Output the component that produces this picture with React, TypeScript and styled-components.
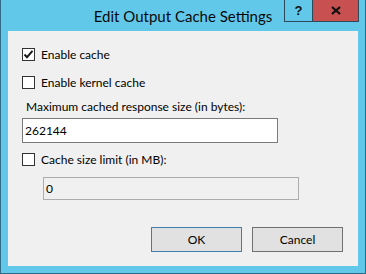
import React from 'react';
import styled, { createGlobalStyle } from 'styled-components';

const GlobalStyle = createGlobalStyle`
  html, body {
    margin: 0;
    padding: 0;
    background: #62c8ea;
  }
  body {
    font-family: 'Segoe UI', Lato, 'Noto Sans', sans-serif;
  }
`;

function CheckMark() {
  return (
    <svg width="11" height="11" viewBox="0 0 11 11">
      <path d="M1.5 5.5 L4 8.2 L9.5 1.8" fill="none" stroke="#1a1a1a" strokeWidth="2" />
    </svg>
  );
}

function Check({ checked, label, gap }: { checked?: boolean; label: string; gap?: number }) {
  return (
    <CheckRow gap={gap}>
      <Box>{checked && <CheckMark />}</Box>
      <CheckLabel>{label}</CheckLabel>
    </CheckRow>
  );
}

export default function App() {
  return (
    <>
      <GlobalStyle />
      <Window>
        <TitleBar>
          <Title>Edit Output Cache Settings</Title>
          <Caption>
            <HelpButton>?</HelpButton>
            <CloseButton>
              <svg width="10" height="9" viewBox="0 0 10 9">
                <path d="M1 1 L9 8 M9 1 L1 8" stroke="#111" strokeWidth="2.2" />
              </svg>
            </CloseButton>
          </Caption>
        </TitleBar>

        <Client>
          <Check checked label="Enable cache" />
          <Check label="Enable kernel cache" />

          <FieldLabel>Maximum cached response size (in bytes):</FieldLabel>
          <TextBox value="262144" readOnly />

          <Check label="Cache size limit (in MB):" gap={11} />
          <TextBox value="0" readOnly disabled indent />

          <Buttons>
            <Button primary>OK</Button>
            <Button>Cancel</Button>
          </Buttons>
        </Client>
      </Window>
    </>
  );
}

const Window = styled.div`
  display: flex;
  flex-flow: column;
  box-sizing: border-box;
  width: 366px;
  height: 274px;
  border: solid 1px #2f6a86;
  border-top: none;
  background-color: #62c8ea;
`;

const TitleBar = styled.div`
  position: relative;
  height: 31px;
  flex-shrink: 0;
`;

const Title = styled.div`
  padding-top: 5px;
  text-align: center;
  color: #0a0a0a;
  font-size: 15px;
  line-height: 22px;
`;

const Caption = styled.div`
  position: absolute;
  top: 0;
  right: 6px;
  display: flex;
`;

const HelpButton = styled.div`
  box-sizing: border-box;
  width: 28px;
  height: 22px;
  border: solid 1px #2c4a5a;
  border-top: none;
  border-right: none;
  display: flex;
  justify-content: center;
  align-items: center;
  color: #111;
  font-weight: bold;
  font-size: 13px;
  font-family: 'Liberation Sans', sans-serif;
`;

const CloseButton = styled.div`
  box-sizing: border-box;
  width: 47px;
  height: 22px;
  border: solid 1px #2c4a5a;
  border-top: none;
  background-color: #c75050;
  display: flex;
  justify-content: center;
  align-items: center;
`;

const Client = styled.div`
  flex: 1;
  margin: 0 7px 7px 7px;
  padding: 17px 15px 0 14px;
  background-color: #f0f0f0;
  display: flex;
  flex-flow: column;
  align-items: flex-start;
`;

const CheckRow = styled.div<{ gap?: number }>`
  display: flex;
  align-items: center;
  height: 13px;
  margin-bottom: ${p => p.gap ?? 15}px;
`;

const Box = styled.div`
  box-sizing: border-box;
  width: 13px;
  height: 13px;
  border: solid 1px #333;
  background-color: #fff;
  display: flex;
  justify-content: center;
  align-items: center;
`;

const CheckLabel = styled.div`
  margin-left: 6px;
  color: #000;
  font-size: 12px;
  line-height: 16px;
`;

const FieldLabel = styled.div`
  margin: -5px 0 3px 4px;
  color: #000;
  font-size: 12px;
  line-height: 16px;
`;

const TextBox = styled.input<{ indent?: boolean }>`
  box-sizing: border-box;
  width: 256px;
  height: ${p => (p.indent ? 23 : 25)}px;
  margin: 0 0 ${p => (p.indent ? 0 : 10)}px ${p => (p.indent ? 21 : 0)}px;
  padding: 0 2px;
  border: solid 1px ${p => (p.indent ? '#acacac' : '#7a7a7a')};
  background-color: ${p => (p.indent ? '#f0f0f0' : '#fff')};
  color: #000;
  font-family: inherit;
  font-size: 12px;
  outline: none;
`;

const Buttons = styled.div`
  display: flex;
  gap: 10px;
  align-self: flex-end;
  margin-top: 27px;
`;

const Button = styled.div<{ primary?: boolean }>`
  box-sizing: border-box;
  width: 91px;
  height: 25px;
  border: solid 1px ${p => (p.primary ? '#3c7fb1' : '#707070')};
  background-color: #e1e1e1;
  display: flex;
  justify-content: center;
  align-items: center;
  color: #000;
  font-size: 12px;
`;
